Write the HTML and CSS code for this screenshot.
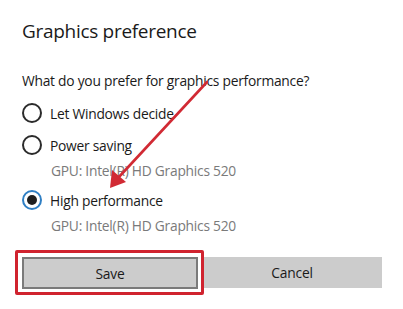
FILE: index.html
```html
<!DOCTYPE html>
<html>
<head>
<meta charset="utf-8">
<link rel="stylesheet" href="styles.css">
</head>
<body>
<div class="page">
  <h1 class="title">Graphics preference</h1>
  <p class="question">What do you prefer for graphics performance?</p>
  <div class="options">
    <div class="option"><span class="radio"></span><span>Let Windows decide</span></div>
    <div class="option"><span class="radio"></span><span>Power saving</span></div>
    <div class="gpu">GPU: Intel(R) HD Graphics 520</div>
    <div class="option selected-row"><span class="radio checked"></span><span>High performance</span></div>
    <div class="gpu">GPU: Intel(R) HD Graphics 520</div>
  </div>
  <div class="buttons">
    <div class="btn save"><span>Save</span><span class="highlight"></span></div>
    <div class="btn cancel">Cancel</div>
  </div>
  <svg class="arrow" width="403" height="309" viewBox="0 0 403 309">
    <line x1="207" y1="82" x2="118" y2="178" stroke="#d12a34" stroke-width="2.6" stroke-linecap="round"/>
    <polygon points="110,188 112,170 126,182" fill="#d12a34"/>
  </svg>
</div>
</body>
</html>
```

FILE: styles.css
```css
html, body {
  margin: 0;
  padding: 0;
  background: #ffffff;
}
.page {
  position: relative;
  width: 403px;
  height: 309px;
  box-sizing: border-box;
  padding: 17px 21px 0 22px;
  font-family: "Open Sans", "Noto Sans", sans-serif;
  color: #1a1a1a;
  overflow: hidden;
}
.title {
  margin: 0;
  font-size: 19px;
  font-weight: 400;
  line-height: 28px;
  letter-spacing: -0.3px;
}
.question {
  margin: 26px 0 0 0;
  font-size: 13.8px;
  line-height: 20px;
  letter-spacing: -0.25px;
}
.options {
  margin-top: 6px;
  display: flex;
  flex-direction: column;
}
.option {
  display: flex;
  align-items: center;
  gap: 8px;
  height: 32px;
  font-size: 13.8px;
  letter-spacing: -0.25px;
}
.selected-row {
  margin-top: 3px;
}
.radio {
  width: 20px;
  height: 20px;
  box-sizing: border-box;
  border: 2px solid #2b2b2b;
  border-radius: 50%;
  display: flex;
  align-items: center;
  justify-content: center;
}
.radio.checked {
  border-color: #2f7fc4;
}
.radio.checked::after {
  content: "";
  width: 10px;
  height: 10px;
  border-radius: 50%;
  background: #1f1f1f;
}
.gpu {
  padding-left: 29px;
  height: 20px;
  line-height: 20px;
  font-size: 13.8px;
  letter-spacing: -0.25px;
  color: #7a7a7a;
}
.buttons {
  margin-top: 21px;
  display: flex;
  gap: 4px;
  width: 360px;
}
.btn {
  height: 32px;
  box-sizing: border-box;
  background: #cccccc;
  display: flex;
  align-items: center;
  justify-content: center;
  font-size: 13.8px;
  letter-spacing: -0.2px;
  color: #1a1a1a;
}
.save {
  position: relative;
  width: 176px;
  border: 2px solid #7a7a7a;
}
.cancel {
  flex: 1;
  height: 31px;
}
.highlight {
  position: absolute;
  left: -9px;
  top: -9px;
  right: -8px;
  bottom: -8px;
  border: 3.5px solid #d0232f;
  border-radius: 2px;
}
.arrow {
  position: absolute;
  left: 0;
  top: 0;
  pointer-events: none;
}
```
